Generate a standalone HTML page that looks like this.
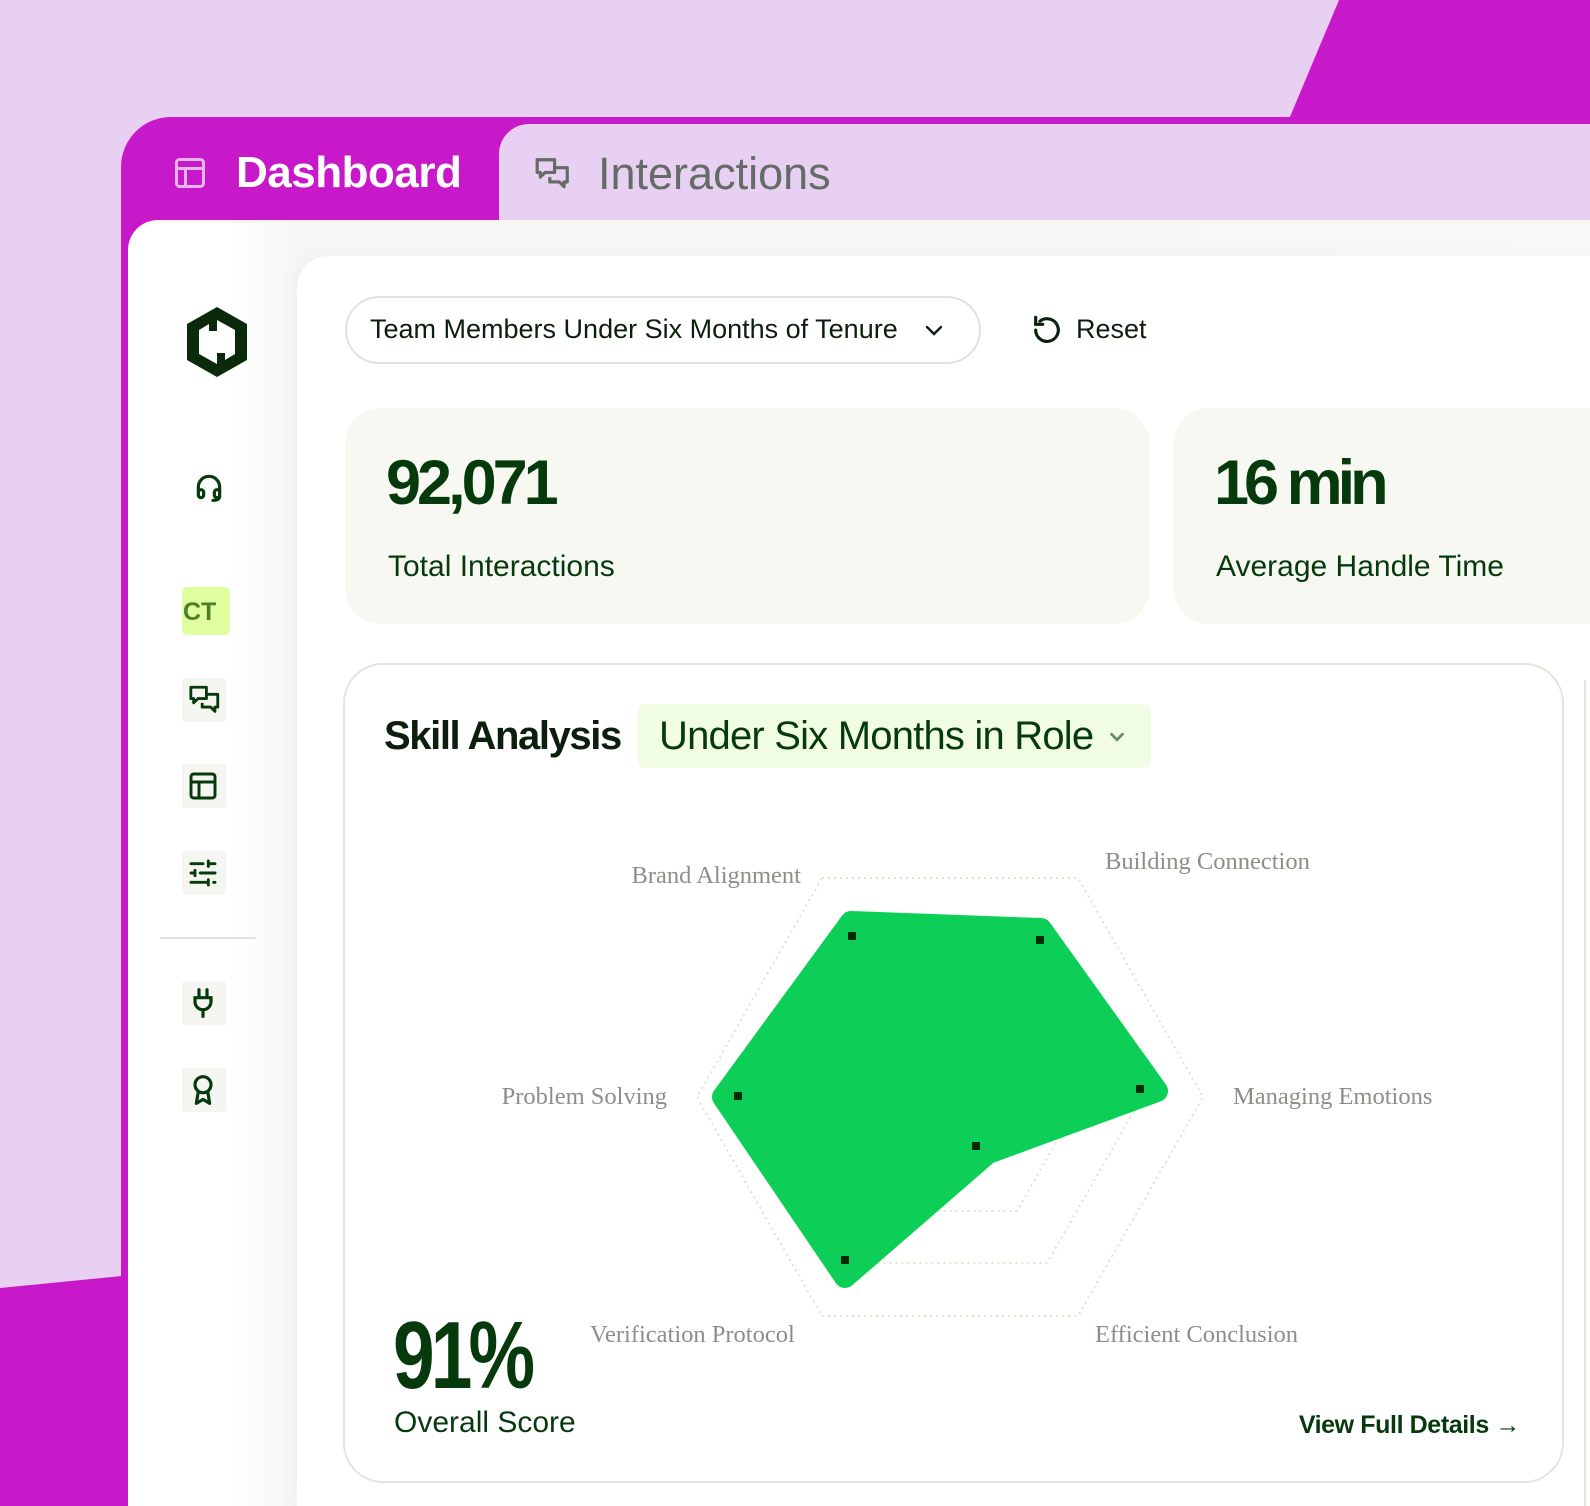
<!DOCTYPE html>
<html style="width:1590px;height:1506px;overflow:hidden"><head><meta charset="utf-8"><style>
*{margin:0;padding:0;box-sizing:border-box}
body{width:1590px;height:1506px;overflow:hidden;background:#e8d0f2;font-family:"Liberation Sans",sans-serif;position:relative;color:#063a0c}
.abs{position:absolute}
.t{position:absolute;white-space:nowrap;line-height:1}
.serif{font-family:"Liberation Serif",serif;color:#8a9087;font-size:24.5px}
.ib{position:absolute;width:44px;height:44px;background:#f5f6f1;border-radius:3px}
</style></head><body>
<svg class="abs" style="left:0;top:0" width="1590" height="1506">
<polygon points="1339,0 1590,0 1590,124 1287,124" fill="#c718c9"/>
<polygon points="0,1288 122,1276 122,1506 0,1506" fill="#c718c9"/>
</svg>
<div class="abs" style="left:121px;top:117px;width:1469px;height:1389px;background:#c718c9;border-top-left-radius:50px"></div>
<div class="abs" style="left:499px;top:124px;width:1091px;height:96px;background:#e8d0f2;border-top-left-radius:30px"></div>
<div class="abs" style="left:421px;top:150px;width:78px;height:70px;background:#c718c9;border-bottom-right-radius:16px"></div>
<div class="abs" style="left:128px;top:220px;width:1462px;height:1286px;background:linear-gradient(90deg,#fff 0,#fff 100px,#f6f6f6 170px,#f8f8f8 100%);border-top-left-radius:30px;border-top:3px solid #f8f7ee"></div>
<div class="abs" style="left:297px;top:256px;width:1293px;height:1250px;background:#fff;border-top-left-radius:32px;box-shadow:-4px 0 20px rgba(0,0,0,0.03)"></div>

<svg class="abs" style="left:172px;top:155px" width="36" height="36" viewBox="0 0 24 24" fill="none" stroke="#e6b6ea" stroke-width="2"><rect x="3" y="3" width="18" height="18" rx="2"/><path d="M3 9h18M9 9v12"/></svg>
<div class="t" style="left:236px;top:151px;font-size:44px;font-weight:bold;color:#fff;letter-spacing:-0.5px">Dashboard</div>
<svg class="abs" style="left:533px;top:155px" width="40" height="38" viewBox="0 0 24 24" fill="none" stroke="#656b67" stroke-width="2" stroke-linejoin="round"><path d="M2 3h11v8H7l-3 3v-3H2z"/><path d="M13 8h8v9h-2v3l-3-3h-6v-3"/></svg>
<div class="t" style="left:598px;top:151px;font-size:45px;color:#656b67">Interactions</div>

<svg class="abs" style="left:183px;top:305px" width="68" height="74" viewBox="0 0 68 74"><path d="M34 2 L64 19 V55 L34 72 L4 55 V19 Z" fill="#0b2a0c"/><path d="M34 15 L52 25 V49 L42 55 L42 48 L34 48 L34 59 L16 49 V25 L26 19 V26 L34 26 Z" fill="#fff"/></svg>

<svg class="abs" style="left:193px;top:470px" width="32" height="34" viewBox="0 0 24 24" fill="none" stroke="#063a0c" stroke-width="2.4" stroke-linecap="round"><path d="M4 15v-3a8 8 0 0 1 16 0v3"/><rect x="4" y="14" width="4" height="6" rx="2"/><rect x="16" y="14" width="4" height="6" rx="2"/><path d="M20 19c0 2-2 3-5 3"/></svg>
<div class="abs" style="left:182px;top:587px;width:48px;height:48px;background:#dfff9f;border-radius:5px"></div>
<div class="t" style="left:183px;top:600px;font-size:25px;font-weight:bold;color:#4f7d27">CT</div>
<div class="ib" style="left:182px;top:678px"></div>
<svg class="abs" style="left:188px;top:683px" width="34" height="34" viewBox="0 0 24 24" fill="none" stroke="#063a0c" stroke-width="2" stroke-linejoin="round"><path d="M2 3h11v8H7l-3 3v-3H2z"/><path d="M13 8h8v9h-2v3l-3-3h-6v-3"/></svg>
<div class="ib" style="left:182px;top:764px"></div>
<svg class="abs" style="left:187px;top:769px" width="32" height="34" viewBox="0 0 24 24" fill="none" stroke="#063a0c" stroke-width="2.2"><rect x="3" y="3" width="18" height="18" rx="2"/><path d="M3 9h18M9 9v12"/></svg>
<div class="ib" style="left:182px;top:851px"></div>
<svg class="abs" style="left:187px;top:856px" width="32" height="34" viewBox="0 0 24 24" fill="none" stroke="#063a0c" stroke-width="2.2" stroke-linecap="round"><path d="M3 5h9M16 5h5M16 3v4M3 12h3M10 12h11M6 10v4M3 19h13M20 19h1M16 17v4"/></svg>
<div class="abs" style="left:160px;top:937px;width:96px;height:2px;background:#e2e2e2"></div>
<div class="ib" style="left:182px;top:981px"></div>
<svg class="abs" style="left:187px;top:986px" width="32" height="34" viewBox="0 0 24 24" fill="none" stroke="#063a0c" stroke-width="2.4" stroke-linecap="round"><path d="M9 2v5M15 2v5M6 8h12v3a6 6 0 0 1-12 0zM12 17v5"/></svg>
<div class="ib" style="left:182px;top:1068px"></div>
<svg class="abs" style="left:187px;top:1073px" width="32" height="34" viewBox="0 0 24 24" fill="none" stroke="#063a0c" stroke-width="2.4" stroke-linejoin="round"><circle cx="12" cy="8" r="6"/><path d="M8.5 13L7 22l5-3 5 3-1.5-9"/></svg>

<div class="abs" style="left:345px;top:296px;width:636px;height:68px;border:2px solid #e2e2dc;border-radius:34px"></div>
<div class="t" style="left:370px;top:316px;font-size:27px;color:#0c1f0d">Team Members Under Six Months of Tenure</div>
<svg class="abs" style="left:922px;top:318px" width="24" height="24" viewBox="0 0 24 24" fill="none" stroke="#0c1f0d" stroke-width="2.4" stroke-linecap="round"><path d="M5 9l7 7 7-7"/></svg>
<svg class="abs" style="left:1030px;top:313px" width="34" height="34" viewBox="0 0 24 24" fill="none" stroke="#0c1f0d" stroke-width="2.2" stroke-linecap="round"><path d="M4 12a8 8 0 1 0 3-6.2"/><path d="M4 3v5h5"/></svg>
<div class="t" style="left:1076px;top:316px;font-size:27px;color:#0c1f0d">Reset</div>

<div class="abs" style="left:345px;top:408px;width:805px;height:216px;background:#f7f8f2;border-radius:36px"></div>
<div class="t" style="left:386px;top:452px;font-size:63px;font-weight:bold;letter-spacing:-4px">92,071</div>
<div class="t" style="left:388px;top:552px;font-size:30px">Total Interactions</div>
<div class="abs" style="left:1173px;top:408px;width:500px;height:216px;background:#f7f8f2;border-radius:36px"></div>
<div class="t" style="left:1214px;top:452px;font-size:63px;font-weight:bold;letter-spacing:-5px">16 min</div>
<div class="t" style="left:1216px;top:552px;font-size:30px">Average Handle Time</div>

<div class="abs" style="left:343px;top:663px;width:1221px;height:820px;border:2px solid #e4e4dc;border-radius:40px;background:#fff"></div>
<div class="abs" style="left:1584px;top:680px;width:6px;height:826px;border-left:2px solid #e4e4dc"></div>
<div class="t" style="left:384px;top:716px;font-size:40px;font-weight:bold;letter-spacing:-1.4px;color:#0c1f0d">Skill Analysis</div>
<div class="abs" style="left:638px;top:704px;width:513px;height:64px;background:#f1fde3;border-radius:7px"></div>
<div class="t" style="left:659px;top:716px;font-size:40px;letter-spacing:-0.8px">Under Six Months in Role</div>
<svg class="abs" style="left:1106px;top:726px" width="22" height="22" viewBox="0 0 24 24" fill="none" stroke="#6e8a6a" stroke-width="3" stroke-linecap="round"><path d="M6 9l6 6 6-6"/></svg>

<svg class="abs" style="left:0;top:0" width="1590" height="1506">
<g fill="none" stroke="#e2e1cd" stroke-width="2" stroke-dasharray="2 4">
<polygon points="822,878 1078,878 1203,1097 1078,1316 822,1316 697,1097"/>
<polygon points="853,931 1047,931 1142,1097 1047,1263 853,1263 758,1097"/>
<polygon points="883,983 1017,983 1082,1097 1017,1211 883,1211 818,1097"/>
<polygon points="914,1036 986,1036 1021,1097 986,1158 914,1158 879,1097"/>
</g>
<polygon points="851,922 1041,929 1157,1091 988,1153 845,1277 723,1097" fill="#0dcf57" stroke="#0dcf57" stroke-width="22" stroke-linejoin="round"/>
<g fill="#052a08">
<rect x="848" y="932" width="8" height="8"/><rect x="1036" y="936" width="8" height="8"/><rect x="1136" y="1085" width="8" height="8"/><rect x="972" y="1142" width="8" height="8"/><rect x="841" y="1256" width="8" height="8"/><rect x="734" y="1092" width="8" height="8"/>
</g>
</svg>
<div class="t serif" style="right:789px;top:864px">Brand Alignment</div>
<div class="t serif" style="left:1105px;top:850px">Building Connection</div>
<div class="t serif" style="right:923px;top:1085px">Problem Solving</div>
<div class="t serif" style="left:1233px;top:1085px">Managing Emotions</div>
<div class="t serif" style="left:590px;top:1323px">Verification Protocol</div>
<div class="t serif" style="left:1095px;top:1323px">Efficient Conclusion</div>

<div class="t" style="left:393px;top:1308px;font-size:96px;font-weight:bold;letter-spacing:-5px;transform:scaleX(0.78);transform-origin:0 0">91%</div>
<div class="t" style="left:394px;top:1408px;font-size:30px">Overall Score</div>
<div class="t" style="right:70px;top:1413px;font-size:25px;font-weight:bold;letter-spacing:-0.4px">View Full Details →</div>
</body></html>
